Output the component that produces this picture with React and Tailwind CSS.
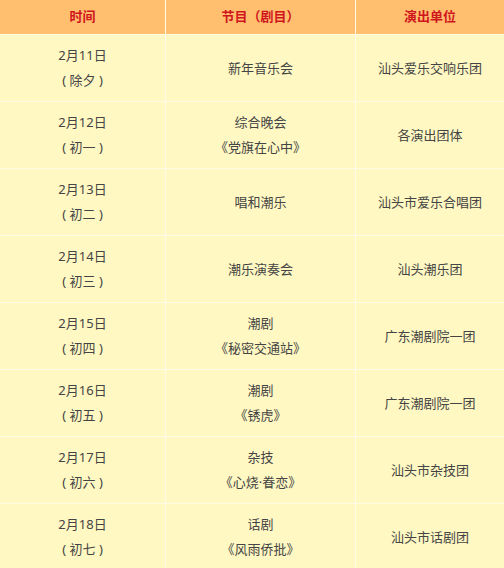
const rows = [
  { date: "2月11日", day: "( 除夕 )", show: ["新年音乐会"], troupe: "汕头爱乐交响乐团" },
  { date: "2月12日", day: "( 初一 )", show: ["综合晚会", "《党旗在心中》"], troupe: "各演出团体" },
  { date: "2月13日", day: "( 初二 )", show: ["唱和潮乐"], troupe: "汕头市爱乐合唱团" },
  { date: "2月14日", day: "( 初三 )", show: ["潮乐演奏会"], troupe: "汕头潮乐团" },
  { date: "2月15日", day: "( 初四 )", show: ["潮剧", "《秘密交通站》"], troupe: "广东潮剧院一团" },
  { date: "2月16日", day: "( 初五 )", show: ["潮剧", "《锈虎》"], troupe: "广东潮剧院一团" },
  { date: "2月17日", day: "( 初六 )", show: ["杂技", "《心烧·眷恋》"], troupe: "汕头市杂技团" },
  { date: "2月18日", day: "( 初七 )", show: ["话剧", "《风雨侨批》"], troupe: "汕头市话剧团" },
];

const font = { fontFamily: '"Noto Sans", "Noto Sans CJK SC", sans-serif' };

const Cell = ({ lines }) => (
  <div className="flex h-[66px] flex-col items-center justify-center bg-[#fff8c2] text-[13px] leading-[25px] text-[#444] [font-feature-settings:'halt']">
    {lines.map((l) => (
      <div key={l} className="whitespace-pre">{l}</div>
    ))}
  </div>
);

const App = () => {
  return (
    <div className="h-[568px] w-[504px] overflow-hidden bg-white" style={font}>
      <div className="grid grid-cols-[165px_189px_148px] gap-px bg-[#fffbe6]">
        {["时间", "节目（剧目）", "演出单位"].map((h) => (
          <div
            key={h}
            className="flex h-[34px] items-center justify-center bg-[#ffbf6f] text-[13px] font-bold text-[#d0161d]"
          >
            {h}
          </div>
        ))}
        {rows.map((r) => (
          <div key={r.date} className="contents">
            <Cell lines={[r.date, r.day]} />
            <Cell lines={r.show} />
            <Cell lines={[r.troupe]} />
          </div>
        ))}
      </div>
    </div>
  );
};

export default App;
